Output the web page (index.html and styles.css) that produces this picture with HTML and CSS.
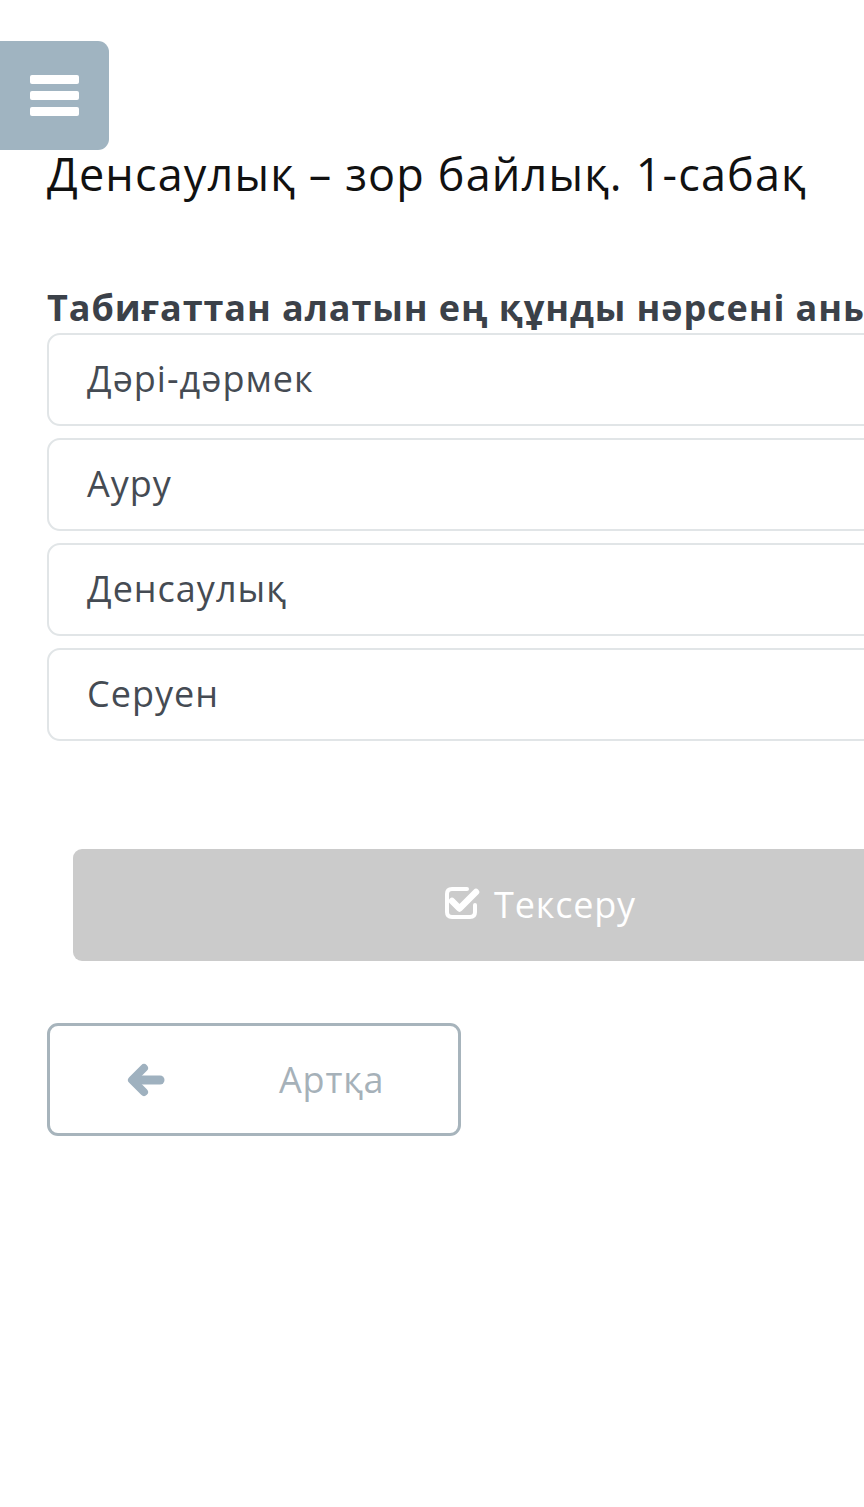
FILE: index.html
```html
<!DOCTYPE html>
<html lang="kk">
<head>
<meta charset="utf-8">
<title>Денсаулық – зор байлық. 1-сабақ</title>
<link rel="stylesheet" href="styles.css">
</head>
<body>
<button class="menu-btn" aria-label="Menu">
  <span class="bar"></span><span class="bar"></span><span class="bar"></span>
</button>
<main class="page">
  <h1 class="title">Денсаулық – зор байлық. 1-сабақ</h1>
  <h2 class="question">Табиғаттан алатын ең құнды нәрсені анықта</h2>
  <ul class="options">
    <li class="option">Дәрі-дәрмек</li>
    <li class="option">Ауру</li>
    <li class="option">Денсаулық</li>
    <li class="option">Серуен</li>
  </ul>
  <button class="check-btn">
    <svg class="check-icon" viewBox="0 0 38 38" width="38" height="38" aria-hidden="true">
      <path d="M25 5 H10 Q5 5 5 10 V28 Q5 33 10 33 H28 Q33 33 33 28 V21" fill="none" stroke="#fff" stroke-width="4" stroke-linecap="round"/>
      <path d="M10 17 L17.5 24.5 L34 8" fill="none" stroke="#fff" stroke-width="6.5" stroke-linecap="round" stroke-linejoin="round"/>
    </svg>
    <span>Тексеру</span>
  </button>
  <button class="back-btn">
    <svg class="back-icon" viewBox="0 0 38 36" width="38" height="36" aria-hidden="true">
      <path d="M17 6 L5 18 L17 30" fill="none" stroke="#9fb1bf" stroke-width="8" stroke-linecap="round" stroke-linejoin="round"/>
      <path d="M7 18 H33" fill="none" stroke="#9fb1bf" stroke-width="9" stroke-linecap="round"/>
    </svg>
    <span class="back-text">Артқа</span>
  </button>
</main>
</body>
</html>
```
FILE: styles.css
```css
html, body {
  margin: 0;
  padding: 0;
  background: #ffffff;
  overflow: hidden;
}
body {
  font-family: "Open Sans", "Noto Sans", sans-serif;
  width: 864px;
  height: 1507px;
  position: relative;
}
.menu-btn {
  position: absolute;
  left: 0;
  top: 41px;
  width: 109px;
  height: 109px;
  border: 0;
  padding: 0;
  background: #a0b4c1;
  border-radius: 0 11px 11px 0;
  display: flex;
  flex-direction: column;
  align-items: center;
  justify-content: center;
  gap: 7px;
  z-index: 2;
}
.menu-btn .bar {
  display: block;
  width: 49px;
  height: 9px;
  background: #ffffff;
  border-radius: 2px;
}
.page {
  width: 988px;
  padding: 147px 0 0 47px;
  display: flex;
  flex-direction: column;
  align-items: flex-start;
}
.title {
  margin: 0;
  font-size: 45px;
  line-height: 54px;
  font-weight: 400;
  letter-spacing: 1.15px;
  color: #111111;
  white-space: nowrap;
}
.question {
  margin: 85px 0 0 0;
  font-size: 36px;
  line-height: 44px;
  font-weight: 700;
  letter-spacing: 0.9px;
  color: #3b4149;
  white-space: nowrap;
}
.options {
  list-style: none;
  margin: 3px 0 0 0;
  padding: 0;
  width: 988px;
  display: flex;
  flex-direction: column;
  gap: 12px;
}
.option {
  box-sizing: border-box;
  height: 93px;
  border: 2.5px solid #e1e5e7;
  border-radius: 13px;
  padding: 22px 0 0 38px;
  font-size: 36px;
  line-height: 44px;
  letter-spacing: 1px;
  color: #454b53;
}
.check-btn {
  margin: 108px 0 0 26px;
  width: 936px;
  height: 112px;
  border: 0;
  border-radius: 9px;
  background: #cbcbcb;
  color: #ffffff;
  font-family: inherit;
  font-size: 36px;
  line-height: 44px;
  letter-spacing: 0.8px;
  display: flex;
  align-items: center;
  justify-content: center;
  gap: 14px;
  padding: 0;
}
.check-icon {
  display: block;
  margin-top: -4px;
  margin-left: -4px;
}
.back-btn {
  margin-top: 62px;
  box-sizing: border-box;
  width: 414px;
  height: 113px;
  border: 3px solid #a7b4bc;
  border-radius: 11px;
  background: #ffffff;
  display: flex;
  align-items: center;
  padding: 0 0 0 77px;
  font-family: inherit;
  font-size: 36px;
  line-height: 44px;
}
.back-icon {
  display: block;
}
.back-text {
  margin-left: 114px;
  letter-spacing: 0.8px;
  color: #a6b1b9;
}
```
